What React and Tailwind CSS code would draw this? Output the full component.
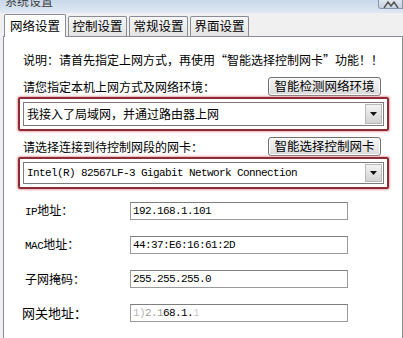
import React from 'react';

const CJK = { fontFamily: '"SimSun", "Noto Sans CJK SC", "DejaVu Sans", sans-serif' };
const MONO = { fontFamily: '"Liberation Mono", "Noto Sans CJK SC", monospace' };

const Tab = ({ label, active }) => (
    active ? (
        <div className="relative z-10 h-[23px] w-[62px] border border-b-0 border-[#898c95] bg-white flex items-center justify-center text-[12.5px] text-black rounded-t-[2px]">
            {label}
        </div>
    ) : (
        <div className="h-[20px] w-[59px] border border-b-0 border-[#898c95] bg-gradient-to-b from-[#f6f6f6] to-[#e3e3e3] flex items-center justify-center text-[12.5px] text-black rounded-t-[2px] mb-[1px]">
            {label}
        </div>
    )
);

const SmartButton = ({ children }) => (
    <button className="h-[19px] w-[113px] rounded-[3px] border border-[#707070] bg-gradient-to-b from-[#f4f4f4] via-[#ebebeb] to-[#d9d9d9] text-[12.5px] leading-none text-black flex items-center justify-center shadow-[inset_0_0_0_1px_#fcfcfc]">
        {children}
    </button>
);

const Combo = ({ children, mono }) => (
    <div className="relative flex-1 border border-[#7b7b7b] bg-white flex items-center pl-[3px]">
        <span className={mono ? 'text-[11px] tracking-[-0.6px] text-black' : 'text-[12px] text-black'} style={mono ? MONO : undefined}>
            {children}
        </span>
        <div className="absolute right-[1px] top-[1px] bottom-[1px] w-[17px] border border-[#b9b9b9] bg-gradient-to-b from-[#f3f3f3] to-[#d2d2d2] flex items-center justify-center">
            <svg width="7" height="4" viewBox="0 0 7 4"><path d="M0 0h7L3.5 4z" fill="#111" /></svg>
        </div>
    </div>
);

const RedBox = ({ h, children }) => (
    <div className={`ml-[14px] w-[371px] ${h} border-2 border-[#8f2b33] rounded-[2px] p-[3px] flex shadow-[0_0_2px_1px_#e7a9ae]`}>
        {children}
    </div>
);

const Field = ({ label, value, mono, labelClass = 'pl-[21px]' }) => (
    <div className="flex items-center h-[18px]">
        <div className={`w-[126px] ${labelClass} text-[12px] text-black`}>
            {mono ? <><span className="text-[11px] tracking-[-0.5px]" style={MONO}>{mono}</span>{label}</> : label}
        </div>
        <div className="w-[218px] h-[18px] border border-[#9a9a9a] border-t-[#7e7e7e] bg-white flex items-center pl-[2px]">
            <span className="text-[11px] tracking-[-0.6px] text-black" style={MONO}>{value}</span>
        </div>
    </div>
);

export default function App() {
    return (
        <div className="w-[403px] h-[338px] overflow-hidden bg-[#f0f0f0]" style={CJK}>
            {/* title bar, cut off at the top */}
            <div className="h-[13px] bg-gradient-to-b from-[#c9d8ea] to-[#dfe8f3] flex justify-between overflow-hidden">
                <span className="ml-[5px] -mt-[6px] text-[12px] leading-[13px] text-[#3c3c3c]">系统设置</span>
                <div className="w-[25px] h-[9px] border border-t-0 border-[#8796aa] rounded-bl-[3px] bg-gradient-to-b from-[#dfe6ef] to-[#c7d3e2] flex justify-center overflow-hidden">
                    <svg width="16" height="9" viewBox="0 0 16 9">
                        <path d="M1 8 L5 2 L8 6 L11 2 L15 8" fill="none" stroke="#555" strokeWidth="1.5" />
                    </svg>
                </div>
            </div>

            {/* tabs */}
            <div className="flex items-end gap-[2px] pl-[4px] h-[24px] -mb-[1px]">
                <Tab label="网络设置" active />
                <Tab label="控制设置" />
                <Tab label="常规设置" />
                <Tab label="界面设置" />
            </div>

            {/* panel */}
            <div className="ml-[3px] w-[400px] h-[320px] border border-[#898c95] bg-white flex flex-col">
                <div className="mt-[15px] ml-[19px] h-[16px] flex items-center text-[12px] text-black whitespace-nowrap">
                    说明：请首先指定上网方式，再使用“智能选择控制网卡”功能！！
                </div>

                <div className="mt-[9px] h-[19px] flex items-center">
                    <span className="ml-[19px] text-[12px] text-black flex-1">请您指定本机上网方式及网络环境：</span>
                    <div className="mr-[21px]"><SmartButton>智能检测网络环境</SmartButton></div>
                </div>

                <div className="mt-[1px]">
                    <RedBox h="h-[34px]">
                        <Combo>我接入了局域网，并通过路由器上网</Combo>
                    </RedBox>
                </div>

                <div className="mt-[6px] h-[19px] flex items-center">
                    <span className="ml-[19px] text-[12px] text-black flex-1">请选择连接到待控制网段的网卡：</span>
                    <div className="mr-[21px]"><SmartButton>智能选择控制网卡</SmartButton></div>
                </div>

                <div className="mt-[1px]">
                    <RedBox h="h-[32px]">
                        <Combo mono>Intel(R) 82567LF-3 Gigabit Network Connection</Combo>
                    </RedBox>
                </div>

                <div className="mt-[13px] flex flex-col gap-[16px]">
                    <Field mono="IP" label="地址：" value="192.168.1.101" />
                    <Field mono="MAC" label="地址：" value="44:37:E6:16:61:2D" />
                    <Field label="子网掩码：" value="255.255.255.0" />
                    <Field
                        label={<span className="text-[13px]">网关地址：</span>}
                        labelClass="pl-[18px]"
                        value={<><span className="opacity-30">1)</span><span className="opacity-40">2.1</span>68.1.<span className="opacity-20">1</span></>}
                    />
                    <Field label="" value="" />
                </div>
            </div>
        </div>
    );
}
